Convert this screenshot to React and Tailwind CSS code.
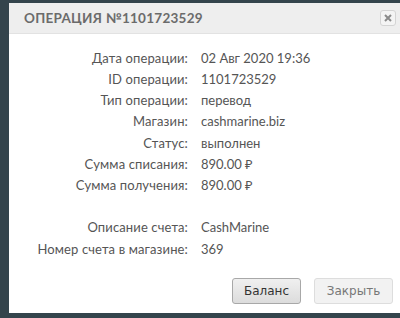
import React from "react";

const rows = [
  ["Дата операции:", "02 Авг 2020 19:36"],
  ["ID операции:", "1101723529"],
  ["Тип операции:", "перевод"],
  ["Магазин:", "cashmarine.biz"],
  ["Статус:", "выполнен"],
  ["Сумма списания:", "890.00 ₽"],
  ["Сумма получения:", "890.00 ₽"],
  ["", ""],
  ["Описание счета:", "CashMarine"],
  ["Номер счета в магазине:", "369"],
];

const App = () => {
  return (
    <div className="w-[400px] h-[318px] bg-[#34444c] pt-[3px] pl-[9px] pb-[5px] overflow-hidden">
      <div className="h-full bg-white flex flex-col">
        <div className="h-[31px] bg-[#eeeeee] border-b border-[#e2e2e2] flex items-center justify-between pl-[15px] pr-[4px] shrink-0">
          <span
            className="text-[13.5px] font-bold tracking-[0.02em] text-[#6b6b6b]"
            style={{ fontFamily: "Lato, 'Noto Sans', sans-serif" }}
          >
            ОПЕРАЦИЯ №1101723529
          </span>
          <button className="w-[16px] h-[16px] rounded-[3px] border border-[#d4d4d4] bg-[#f4f4f4] flex items-center justify-center">
            <svg width="8" height="8" viewBox="0 0 8 8">
              <path d="M1 1L7 7M7 1L1 7" stroke="#8a8a8a" strokeWidth="2" />
            </svg>
          </button>
        </div>
        <div
          className="flex-1 pt-[14px] text-[13px] text-[#555555]"
          style={{ fontFamily: "Lato, 'Noto Sans', sans-serif" }}
        >
          {rows.map(([label, value], i) => (
            <div key={i} className="flex h-[21.2px] items-center">
              <div className="w-[179px] text-right tracking-[0.01em]">{label}</div>
              <div className="pl-[13px]">{value}</div>
            </div>
          ))}
        </div>
        <div
          className="flex justify-end gap-[13px] pr-[7px] pb-[9px] shrink-0"
          style={{ fontFamily: "'DejaVu Sans', sans-serif" }}
        >
          <button className="w-[69px] h-[26px] rounded-[3px] border border-[#a8a8a8] bg-gradient-to-b from-[#f0f0f0] to-[#dcdcdc] text-[12px] text-[#333333]">
            Баланс
          </button>
          <button className="w-[79px] h-[26px] rounded-[3px] border border-[#dddddd] bg-[#f2f2f2] text-[12px] text-[#777777]">
            Закрыть
          </button>
        </div>
      </div>
    </div>
  );
};

export default App;
